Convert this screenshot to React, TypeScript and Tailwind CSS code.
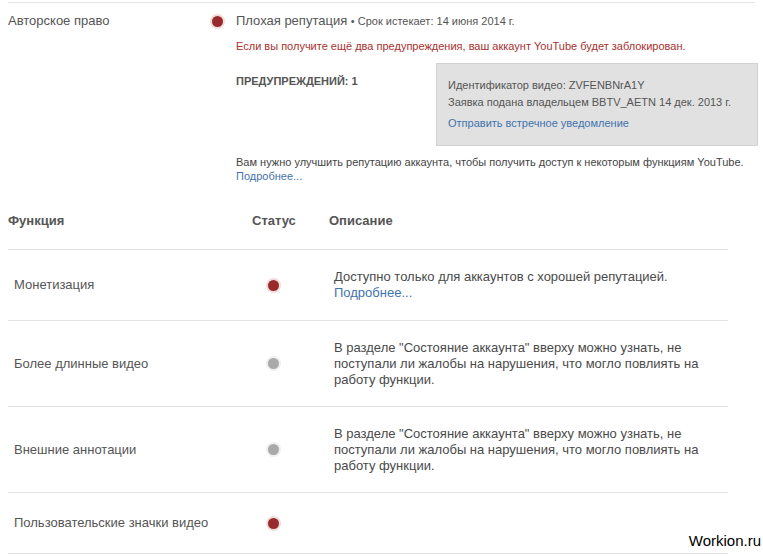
const rows = [
  {
    name: "Монетизация",
    status: "bad",
    h: "h-[71px]",
    desc: "Доступно только для аккаунтов с хорошей репутацией.",
    more: true,
  },
  {
    name: "Более длинные видео",
    status: "off",
    h: "h-[86px]",
    desc: 'В разделе "Состояние аккаунта" вверху можно узнать, не поступали ли жалобы на нарушения, что могло повлиять на работу функции.',
    more: false,
  },
  {
    name: "Внешние аннотации",
    status: "off",
    h: "h-[86px]",
    desc: 'В разделе "Состояние аккаунта" вверху можно узнать, не поступали ли жалобы на нарушения, что могло повлиять на работу функции.',
    more: false,
  },
  {
    name: "Пользовательские значки видео",
    status: "bad",
    h: "h-[61px]",
    desc: "",
    more: false,
  },
];

function Dot({ status }: { status: string }) {
  return status === "bad" ? (
    <span className="block w-[11px] h-[11px] rounded-full bg-[#982a2c] shadow-[0_0_0_2px_#f1dcdc]" />
  ) : (
    <span className="block w-[11px] h-[11px] rounded-full bg-[#a9a9a9] shadow-[0_0_0_2px_#efefef]" />
  );
}

export default function App() {
  return (
    <div className="relative w-[763px] h-[556px] overflow-hidden bg-white pt-[2px] font-['Liberation_Sans',Arial,sans-serif] text-[#555]">
      {/* Account status */}
      <div className="mx-2 border-t border-[#e6e6e6] pt-[10px] flex">
        <div className="w-[204px] shrink-0 text-[13px] leading-4">Авторское право</div>
        <div className="w-[24px] shrink-0 pt-[3px]">
          <Dot status="bad" />
        </div>
        <div className="flex-1">
          <div className="text-[13px] leading-4">
            Плохая репутация{" "}
            <span className="text-[11px]">• Срок истекает: 14 июня 2014 г.</span>
          </div>
          <div className="mt-[10px] text-[11px] leading-[14px] text-[#a8312f]">
            Если вы получите ещё два предупреждения, ваш аккаунт YouTube будет заблокирован.
          </div>
          <div className="mt-[10px] flex items-start">
            <div className="w-[200px] shrink-0 pt-[11px] text-[11px] leading-[14px] font-bold">
              ПРЕДУПРЕЖДЕНИЙ: 1
            </div>
            <div className="w-[322px] border border-[#d2d2d2] bg-[#e1e1e1] pl-[11px] pt-[14px] pb-[15px] text-[11px] leading-[14px]">
              <div>Идентификатор видео: ZVFENBNrA1Y</div>
              <div className="mt-[3px]">Заявка подана владельцем BBTV_AETN 14 дек. 2013 г.</div>
              <div className="mt-[7px] text-[#3f73ad]">Отправить встречное уведомление</div>
            </div>
          </div>
          <div className="mt-[9px] text-[11px] leading-[14px] text-[#444]">
            Вам нужно улучшить репутацию аккаунта, чтобы получить доступ к некоторым функциям YouTube.
            <div className="text-[#3f73ad]">Подробнее...</div>
          </div>
        </div>
      </div>

      {/* Features table */}
      <div className="ml-2 w-[720px]">
        <div className="flex pt-[30px] pb-[20px] border-b border-[#e3e3e3] text-[13px] leading-4 font-bold">
          <div className="w-[244px]">Функция</div>
          <div className="w-[77px]">Статус</div>
          <div>Описание</div>
        </div>
        {rows.map((r) => (
          <div key={r.name} className={`flex items-center border-b border-[#e3e3e3] ${r.h}`}>
            <div className="w-[260px] pl-[6px] text-[13px] leading-4">{r.name}</div>
            <div className="w-[66px]">
              <Dot status={r.status} />
            </div>
            <div className="w-[372px] text-[13px] leading-4 text-[#4a4a4a]">
              {r.desc}
              {r.more && <div className="text-[#3f73ad]">Подробнее...</div>}
            </div>
          </div>
        ))}
      </div>

      <div className="absolute right-[2px] top-[531px] text-[15px] leading-5 text-black">Workion.ru</div>
    </div>
  );
}
